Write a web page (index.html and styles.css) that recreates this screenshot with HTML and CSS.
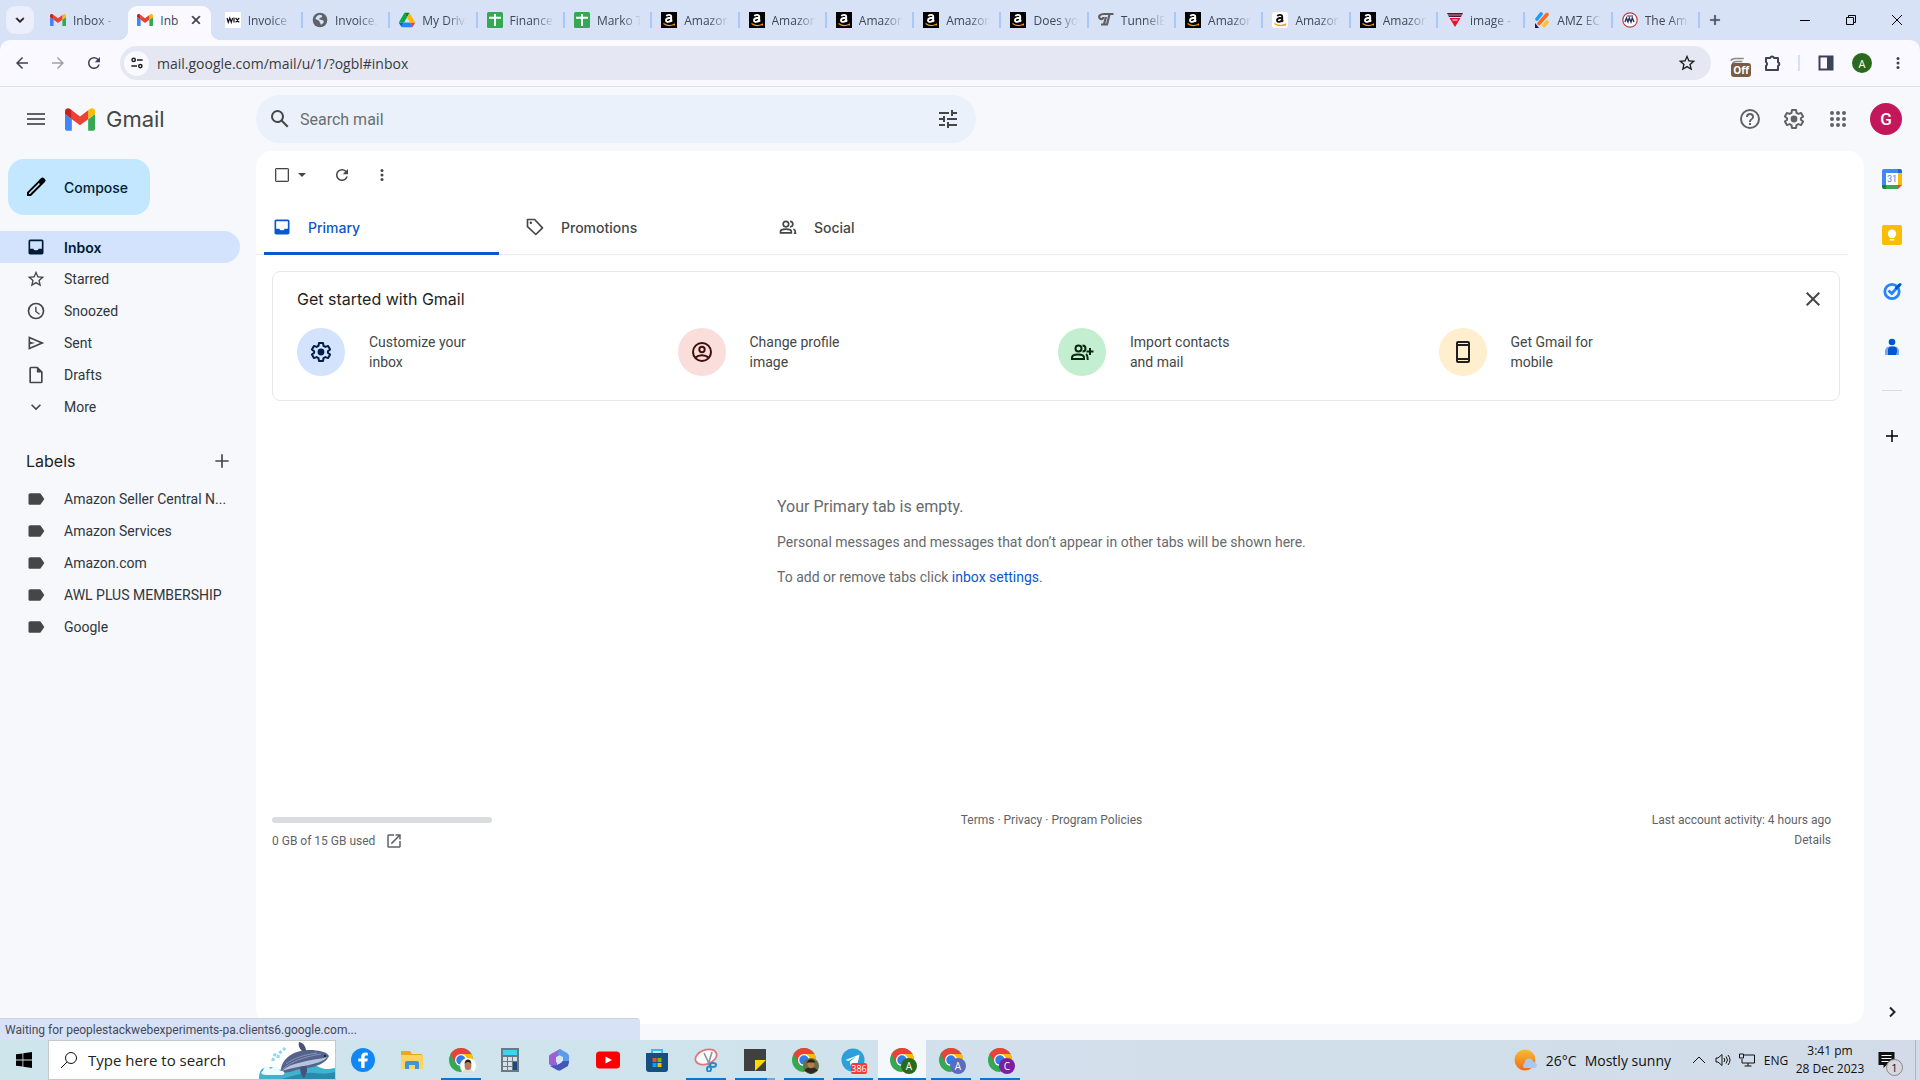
FILE: index.html
```html
<!DOCTYPE html>
<html lang="en">
<head>
<meta charset="utf-8">
<title>Inbox - Gmail</title>
<link rel="stylesheet" href="styles.css">
</head>
<body>
<svg class="sprite" aria-hidden="true">
  <symbol id="gmail" viewBox="52 42 88 66"><path fill="#4285f4" d="M58 108h14V74L52 59v43c0 3.32 2.69 6 6 6"/><path fill="#34a853" d="M120 108h14c3.32 0 6-2.69 6-6V59l-20 15"/><path fill="#fbbc04" d="M120 48v26l20-15v-8c0-7.42-8.47-11.65-14.4-7.2"/><path fill="#ea4335" d="M72 74V48l24 18 24-18v26L96 92"/><path fill="#c5221f" d="M52 51v8l20 15V48l-5.6-4.2c-5.94-4.45-14.4-.22-14.4 7.2"/></symbol>
  <symbol id="drive" viewBox="0 0 87.3 78"><path d="m6.6 66.85 3.85 6.65c.8 1.4 1.95 2.5 3.3 3.3l13.75-23.8H0c0 1.55.4 3.1 1.2 4.5z" fill="#0066da"/><path d="M43.65 25 29.9 1.2c-1.35.8-2.5 1.9-3.3 3.3l-25.4 44A9.06 9.06 0 0 0 0 53h27.5z" fill="#00ac47"/><path d="M73.55 76.8c1.35-.8 2.5-1.9 3.3-3.3l1.6-2.75L86.1 57.5c.8-1.4 1.2-2.95 1.2-4.5H59.8l5.85 11.5z" fill="#ea4335"/><path d="M43.65 25 57.4 1.2C56.05.4 54.5 0 52.9 0H34.4c-1.6 0-3.15.45-4.5 1.2z" fill="#00832d"/><path d="M59.8 53H27.5L13.75 76.8c1.35.8 2.9 1.2 4.5 1.2h50.8c1.6 0 3.15-.45 4.5-1.2z" fill="#2684fc"/><path d="m73.4 26.5-12.7-22c-.8-1.4-1.95-2.5-3.3-3.3L43.65 25 59.8 53h27.45c0-1.55-.4-3.1-1.2-4.5z" fill="#ffba00"/></symbol>
  <symbol id="wix" viewBox="0 0 16 16"><path fill="#fff" d="M0 0h16v16H0z"/><path d="M2 6l1.3 4.3L4.8 6l1.5 4.3L7.6 6M9 5.6v5M10.6 6l3.6 4.4M14.2 6l-3.6 4.4" fill="none" stroke="#111" stroke-width="1.2"/></symbol>
  <symbol id="globe" viewBox="0 0 24 24"><circle cx="12" cy="12" r="11" fill="#5f6368"/><path fill="#d8e2f6" d="M11 4c3 0 5 1 4 3s-4 1-4 3 4 1 6 3-1 5-4 6c0-3-2-3-2-5s-4-2-6-4c1-3 3-5 6-6z"/></symbol>
  <symbol id="sheets" viewBox="0 0 16 16"><rect width="16" height="16" rx="1.5" fill="#34a853"/><path d="M2 5.700h12M8 2v12" stroke="#fff" stroke-width="2"/></symbol>
  <symbol id="amazon" viewBox="0 0 16 16"><path d="M0 0h16v16H0z" fill="#000"/><path d="M5.500 4.300c.5-2 4.700-2 4.700.3v3.800l.8 1.200M10 5.700c-3 .1-5 .6-5 2.500 0 2.300 4 2.200 5-.4" fill="none" stroke="#fff" stroke-width="1.9"/><path d="M2.500 11.500q5 3.600 10.500 1M13.400 11.600v2" fill="none" stroke="#f90" stroke-width="1.2"/></symbol>
  <symbol id="amazon-white" viewBox="0 0 16 16"><rect width="16" height="16" rx="3" fill="#fff"/><path d="M5.500 4.300c.5-2 4.700-2 4.700.3v3.800l.8 1.200M10 5.700c-3 .1-5 .6-5 2.500 0 2.300 4 2.200 5-.4" fill="none" stroke="#111" stroke-width="1.9"/><path d="M2.500 11.500q5 3.600 10.500 1M13.400 11.600v2" fill="none" stroke="#f90" stroke-width="1.4"/></symbol>
  <symbol id="tunnel" viewBox="0 0 16 16"><path d="M15.500 2H6C2 2 .5 4 1.500 6s4 1 4-1M11.500 2.500 9 12.500H3M8 5l-2 7" fill="none" stroke="#5f5f62" stroke-width="2.2"/></symbol>
  <symbol id="triangle" viewBox="0 0 16 16"><path d="M0 1h16l-2 4H2z" fill="#4a1d3c"/><path d="M2.500 6h11L8 15z" fill="#e8112d"/><path d="M5.500 8h5" stroke="#fff" stroke-width="1"/><path d="M1 3h14" stroke="#d88" stroke-width="1"/></symbol>
  <symbol id="bars" viewBox="0 0 16 16"><g stroke-width="3.6" stroke-linecap="round"><path d="M3 7l4-5" stroke="#1e9bff"/><path d="M5 11.500l8-9" stroke="#ff6a1a"/><path d="M10 13.500l3-3.500" stroke="#ffc02e"/></g><path d="M1 11l4 5H1z" fill="#1b1464"/></symbol>
  <symbol id="round" viewBox="0 0 16 16"><circle cx="8" cy="8" r="7.2" fill="#fff" stroke="#c03a46" stroke-width="1.2"/><path d="M3 10l1.500-4L6 10l1.300-4L9 10l1.300-4 1.700 4" fill="none" stroke="#27335f" stroke-width="1.4"/><path d="M5 4h6" stroke="#27335f"/></symbol>
  <symbol id="close" viewBox="0 0 24 24"><path d="M19 6.410 17.590 5 12 10.590 6.410 5 5 6.410 10.590 12 5 17.590 6.410 19 12 13.410 17.590 19 19 17.590 13.410 12z"/></symbol>
  <symbol id="plus" viewBox="0 0 24 24"><path d="M20 13h-7v7h-2v-7H4v-2h7V4h2v7h7z"/></symbol>
  <symbol id="back" viewBox="0 0 24 24"><path d="M20 11H7.830l5.590-5.590L12 4l-8 8 8 8 1.410-1.410L7.830 13H20z"/></symbol>
  <symbol id="refresh" viewBox="0 0 24 24"><path d="M17.650 6.350A7.960 7.960 0 0 0 12 4a8 8 0 1 0 7.730 10h-2.080A5.990 5.990 0 0 1 12 18a6 6 0 1 1 0-12c1.660 0 3.140.69 4.220 1.780L13 11h7V4z"/></symbol>
  <symbol id="sliders" viewBox="0 0 16 16"><g fill="none" stroke="#1f1f1f" stroke-width="1.7"><circle cx="4.200" cy="4.500" r="1.9"/><path d="M8 4.500h6.500M1.500 11.500H8"/><circle cx="11.800" cy="11.500" r="1.9"/></g></symbol>
  <symbol id="star" viewBox="0 0 24 24"><path d="m22 9.240-7.190-.62L12 2 9.190 8.630 2 9.240l5.460 4.730L5.820 21 12 17.270 18.180 21l-1.630-7.030zM12 15.400l-3.760 2.270 1-4.280-3.320-2.880 4.380-.38L12 6.100l1.710 4.040 4.380.38-3.320 2.880 1 4.280z"/></symbol>
  <symbol id="puzzle" viewBox="0 0 20 20"><path d="M3 5h4.200a2 2 0 0 1 3.800 0H15v4.200a2 2 0 0 1 0 3.800V17H3v-4.200a2.200 2.200 0 0 0 0-3.800z" fill="none" stroke="#3c4257" stroke-width="2" stroke-linejoin="round"/></symbol>
  <symbol id="more" viewBox="0 0 24 24"><circle cx="12" cy="6" r="2"/><circle cx="12" cy="12" r="2"/><circle cx="12" cy="18" r="2"/></symbol>
  <symbol id="menu" viewBox="0 0 24 24"><path d="M3 18h18v-2H3zm0-5h18v-2H3zm0-7v2h18V6z"/></symbol>
  <symbol id="search" viewBox="0 0 24 24"><path d="M20.490 19l-5.730-5.730A6.460 6.460 0 0 0 16 9.500 6.500 6.500 0 1 0 9.500 16c1.420 0 2.720-.46 3.780-1.240L19 20.490zM5 9.500a4.500 4.500 0 1 1 9 0 4.500 4.500 0 0 1-9 0z"/></symbol>
  <symbol id="tune" viewBox="0 0 24 24"><path d="M3 17v2h6v-2zM3 5v2h10V5zm10 16v-2h8v-2h-8v-2h-2v6zM7 9v2H3v2h4v2h2V9zm14 4v-2H11v2zm-6-4h2V7h4V5h-4V3h-2z"/></symbol>
  <symbol id="help" viewBox="0 0 24 24"><path d="M11 18h2v-2h-2zm1-16a10 10 0 1 0 0 20 10 10 0 0 0 0-20zm0 18a8 8 0 1 1 0-16 8 8 0 0 1 0 16zm0-14a4 4 0 0 0-4 4h2c0-1.100.9-2 2-2s2 .9 2 2c0 2-3 1.750-3 5h2c0-2.250 3-2.500 3-5a4 4 0 0 0-4-4z"/></symbol>
  <symbol id="gear" viewBox="0 0 24 24"><path d="M10 3h4l.5 2.800 1.900 1.100 2.700-1 2 3.500-2.200 1.800v1.600l2.200 1.800-2 3.500-2.700-1-1.900 1.100L14 21h-4l-.5-2.800-1.900-1.100-2.700 1-2-3.500 2.200-1.800v-1.600L2.900 9.400l2-3.500 2.700 1 1.900-1.100z" fill="none" stroke="currentColor" stroke-width="2" stroke-linejoin="round"/><circle cx="12" cy="12" r="3.4"/></symbol>
  <symbol id="apps" viewBox="0 0 24 24"><circle cx="6" cy="6" r="2"/><circle cx="12" cy="6" r="2"/><circle cx="18" cy="6" r="2"/><circle cx="6" cy="12" r="2"/><circle cx="12" cy="12" r="2"/><circle cx="18" cy="12" r="2"/><circle cx="6" cy="18" r="2"/><circle cx="12" cy="18" r="2"/><circle cx="18" cy="18" r="2"/></symbol>
  <symbol id="pencil" viewBox="0 0 24 24"><path d="m3 17.200 12-12 .1-.1 1.900-1.900a2.200 2.200 0 0 1 3.100 0l.8.800a2.200 2.200 0 0 1 0 3.100L7 21H3zm2 .9v.9h1L16 9.100 14.900 8z"/></symbol>
  <symbol id="inbox" viewBox="0 0 24 24"><path d="M19 3H5a2 2 0 0 0-2 2v14c0 1.100.89 2 2 2h14a2 2 0 0 0 2-2V5a2 2 0 0 0-2-2zm0 11h-4c0 1.660-1.350 2-3 2s-3-.34-3-2H5V5h14z"/></symbol>
  <symbol id="clock" viewBox="0 0 24 24"><path d="M12 2a10 10 0 1 0 0 20 10 10 0 0 0 0-20zm0 18a8 8 0 1 1 0-16 8 8 0 0 1 0 16zm.7-13H11v6l4.800 3.600 1-1.400-4.100-3z"/></symbol>
  <symbol id="send" viewBox="0 0 24 24"><path d="M3 4v16l19-8zm2 13v-3.500l6-1.500-6-1.500V7l11.850 5z"/></symbol>
  <symbol id="file" viewBox="0 0 24 24"><path d="M14 2H6a2 2 0 0 0-2 2v16c0 1.100.9 2 2 2h12a2 2 0 0 0 2-2V8zM6 20V4h7v5h5v11z"/></symbol>
  <symbol id="down" viewBox="0 0 24 24"><path d="M16.590 8.590 12 13.170 7.410 8.590 6 10l6 6 6-6z"/></symbol>
  <symbol id="label" viewBox="0 0 24 24"><path d="M17.630 5.840A2 2 0 0 0 16 5H5a2 2 0 0 0-2 2v10c0 1.100.9 2 2 2h11c.67 0 1.270-.33 1.630-.84L22 12z"/></symbol>
  <symbol id="tag" viewBox="0 0 24 24"><path d="M3 3h8.500l9.500 10-8 8-10-9.500z" fill="none" stroke="currentColor" stroke-width="2" stroke-linejoin="round"/><circle cx="7" cy="7" r="1.5"/></symbol>
  <symbol id="people" viewBox="0 0 24 24"><g fill="none" stroke="currentColor" stroke-width="2"><circle cx="9.500" cy="8.500" r="3.3"/><path d="M3 19v-1.500c0-4 13-4 13 0V19z"/><path d="M14.500 5.200a3.300 3.300 0 0 1 0 6.600M18.500 14.500c2 1 2.500 2 2.500 5h-2"/></g></symbol>
  <symbol id="person" viewBox="0 0 24 24"><g fill="none" stroke="currentColor" stroke-width="2"><circle cx="12" cy="12" r="9"/><circle cx="12" cy="9.500" r="2.7"/><path d="M5.500 17.500c3-3 10-3 13 0"/></g></symbol>
  <symbol id="add-people" viewBox="0 0 24 24"><g fill="none" stroke="currentColor" stroke-width="2"><circle cx="8.500" cy="8.500" r="3"/><path d="M2 19v-1.500c0-4 12-4 12 0V19z"/><path d="M12.500 5.500a3 3 0 0 1 0 6M16 14c1.500 1 1.700 2 1.700 6M20 8v7M16.500 11.500h7"/></g></symbol>
  <symbol id="phone" viewBox="0 0 24 24"><path d="M17 1H7a2 2 0 0 0-2 2v18c0 1.100.9 2 2 2h10a2 2 0 0 0 2-2V3a2 2 0 0 0-2-2zm0 20H7v-1h10zm0-3H7V6h10zM7 4V3h10v1z"/></symbol>
  <symbol id="launch" viewBox="0 0 24 24"><path d="M19 19H5V5h7V3H5a2 2 0 0 0-2 2v14a2 2 0 0 0 2 2h14c1.100 0 2-.9 2-2v-7h-2zM14 3v2h3.590l-9.830 9.830 1.410 1.410L19 6.410V10h2V3z"/></symbol>
  <symbol id="chrome" viewBox="0 0 48 48"><circle cx="24" cy="24" r="24" fill="#34a853"/><path fill="#fbbc04" d="M24 12h20.800A24 24 0 0 1 24 48l10.400-18z"/><path fill="#ea4335" d="M3.200 12a24 24 0 0 1 41.600 0H24L13.600 30z"/><circle cx="24" cy="24" r="12" fill="#fff"/><circle cx="24" cy="24" r="9.5" fill="#2f7de9"/></symbol>
</svg>

<header class="browser">
  <div class="tabstrip">
    <button class="tab-search" aria-label="Search tabs"><svg><use href="#down"/></svg></button>
    <nav class="tabs">
      <a href="#" class="tab plain"><svg><use href="#gmail"/></svg><span>Inbox -</span></a>
      <div class="tab active"><svg><use href="#gmail"/></svg><span>Inb</span><button class="tab-close" aria-label="Close tab"><svg><use href="#close"/></svg></button></div>
      <a href="#" class="tab plain"><svg><use href="#wix"/></svg><span>Invoice</span></a>
      <a href="#" class="tab"><svg><use href="#globe"/></svg><span>Invoice.</span></a>
      <a href="#" class="tab"><svg><use href="#drive"/></svg><span>My Driv</span></a>
      <a href="#" class="tab"><svg><use href="#sheets"/></svg><span>Finance</span></a>
      <a href="#" class="tab"><svg><use href="#sheets"/></svg><span>Marko T</span></a>
      <a href="#" class="tab"><svg><use href="#amazon"/></svg><span>Amazor</span></a>
      <a href="#" class="tab"><svg><use href="#amazon"/></svg><span>Amazor</span></a>
      <a href="#" class="tab"><svg><use href="#amazon"/></svg><span>Amazor</span></a>
      <a href="#" class="tab"><svg><use href="#amazon"/></svg><span>Amazor</span></a>
      <a href="#" class="tab"><svg><use href="#amazon"/></svg><span>Does yo</span></a>
      <a href="#" class="tab"><svg><use href="#tunnel"/></svg><span>TunnelE</span></a>
      <a href="#" class="tab"><svg><use href="#amazon"/></svg><span>Amazor</span></a>
      <a href="#" class="tab"><svg><use href="#amazon-white"/></svg><span>Amazor</span></a>
      <a href="#" class="tab"><svg><use href="#amazon"/></svg><span>Amazor</span></a>
      <a href="#" class="tab"><svg><use href="#triangle"/></svg><span>image -</span></a>
      <a href="#" class="tab"><svg><use href="#bars"/></svg><span>AMZ EC</span></a>
      <a href="#" class="tab"><svg><use href="#round"/></svg><span>The Am</span></a>
    </nav>
    <button class="new-tab" aria-label="New tab"><svg><use href="#plus"/></svg></button>
    <div class="window-buttons">
      <button aria-label="Minimize"><svg viewBox="0 0 12 12"><path d="M1 6.500h10"/></svg></button>
      <button aria-label="Restore"><svg viewBox="0 0 12 12"><path d="M1.500 3.500h7v7h-7zM3.500 3.500v-2h7v7h-2"/></svg></button>
      <button aria-label="Close"><svg viewBox="0 0 12 12"><path d="M1 1l10 10M11 1 1 11"/></svg></button>
    </div>
  </div>
  <div class="toolbar">
    <button class="tool" aria-label="Back"><svg><use href="#back"/></svg></button>
    <button class="tool forward" aria-label="Forward"><svg><use href="#back"/></svg></button>
    <button class="tool" aria-label="Reload"><svg><use href="#refresh"/></svg></button>
    <div class="omnibox">
      <button class="site-info" aria-label="Site information"><svg><use href="#sliders"/></svg></button>
      <input aria-label="Address" value="mail.google.com/mail/u/1/?ogbl#inbox">
      <button class="bookmark" aria-label="Bookmark"><svg><use href="#star"/></svg></button>
    </div>
    <div class="extensions">
      <button class="tool ext" aria-label="Extension"><svg viewBox="0 0 24 24"><path d="M4 9c1-3 3-3 6-3h11M6 13c1-3 3-3 5-3h8M7 13v7" fill="none" stroke="#8a8a8a" stroke-width="2"/></svg><span class="off">Off</span></button>
      <button class="tool" aria-label="Extensions"><svg class="puzzle"><use href="#puzzle"/></svg></button>
      <i class="divider"></i>
      <button class="tool" aria-label="Side panel"><svg viewBox="0 0 18 18"><path d="M2.500 2.500h13v13h-13z" fill="none" stroke="#3c4257" stroke-width="2"/><path d="M10 2h6v14h-6z"/></svg></button>
      <button class="profile" aria-label="Profile">A</button>
      <button class="tool" aria-label="Menu"><svg><use href="#more"/></svg></button>
    </div>
  </div>
</header>

<div class="gmail">
  <header class="mail-header">
    <div class="brand">
      <button class="icon-button" aria-label="Main menu"><svg><use href="#menu"/></svg></button>
      <svg class="logo"><use href="#gmail"/></svg><span>Gmail</span>
    </div>
    <form class="search">
      <button type="button" aria-label="Search"><svg><use href="#search"/></svg></button>
      <input aria-label="Search mail" placeholder="Search mail">
      <button type="button" aria-label="Search options"><svg><use href="#tune"/></svg></button>
    </form>
    <div class="account">
      <button class="icon-button" aria-label="Support"><svg><use href="#help"/></svg></button>
      <button class="icon-button" aria-label="Settings"><svg><use href="#gear"/></svg></button>
      <button class="icon-button" aria-label="Google apps"><svg><use href="#apps"/></svg></button>
      <button class="avatar" aria-label="Account">G</button>
    </div>
  </header>

  <aside class="sidebar">
    <button class="compose"><svg><use href="#pencil"/></svg>Compose</button>
    <nav>
      <a href="#" class="current"><svg><use href="#inbox"/></svg><span>Inbox</span></a>
      <a href="#"><svg><use href="#star"/></svg><span>Starred</span></a>
      <a href="#"><svg><use href="#clock"/></svg><span>Snoozed</span></a>
      <a href="#"><svg><use href="#send"/></svg><span>Sent</span></a>
      <a href="#"><svg><use href="#file"/></svg><span>Drafts</span></a>
      <a href="#"><svg><use href="#down"/></svg><span>More</span></a>
    </nav>
    <div class="labels-head"><h2>Labels</h2><button aria-label="Create new label"><svg><use href="#plus"/></svg></button></div>
    <nav>
      <a href="#"><svg><use href="#label"/></svg><span>Amazon Seller Central N...</span></a>
      <a href="#"><svg><use href="#label"/></svg><span>Amazon Services</span></a>
      <a href="#"><svg><use href="#label"/></svg><span>Amazon.com</span></a>
      <a href="#"><svg><use href="#label"/></svg><span>AWL PLUS MEMBERSHIP</span></a>
      <a href="#"><svg><use href="#label"/></svg><span>Google</span></a>
    </nav>
  </aside>

  <main class="content">
    <div class="actions">
      <input type="checkbox" aria-label="Select all">
      <button class="caret" aria-label="Select options"><svg viewBox="0 0 10 10"><path d="M1 3h8L5 7z"/></svg></button>
      <button class="act" aria-label="Refresh"><svg><use href="#refresh"/></svg></button>
      <button class="act" aria-label="More"><svg><use href="#more"/></svg></button>
    </div>
    <nav class="categories">
      <a href="#" class="selected"><svg><use href="#inbox"/></svg>Primary</a>
      <a href="#"><svg><use href="#tag"/></svg>Promotions</a>
      <a href="#"><svg><use href="#people"/></svg>Social</a>
    </nav>
    <section class="starter">
      <div class="starter-head"><h1>Get started with Gmail</h1><button aria-label="Dismiss"><svg><use href="#close"/></svg></button></div>
      <div class="steps">
        <a href="#"><span class="disc blue"><svg><use href="#gear"/></svg></span><span>Customize your<br>inbox</span></a>
        <a href="#"><span class="disc red"><svg><use href="#person"/></svg></span><span>Change profile<br>image</span></a>
        <a href="#"><span class="disc green"><svg><use href="#add-people"/></svg></span><span>Import contacts<br>and mail</span></a>
        <a href="#"><span class="disc yellow"><svg><use href="#phone"/></svg></span><span>Get Gmail for<br>mobile</span></a>
      </div>
    </section>
    <section class="empty">
      <div>
        <h2>Your Primary tab is empty.</h2>
        <p>Personal messages and messages that don’t appear in other tabs will be shown here.</p>
        <p>To add or remove tabs click <a href="#">inbox settings</a>.</p>
      </div>
    </section>
    <footer>
      <div class="storage"><div class="meter"></div><p>0 GB of 15 GB used <svg><use href="#launch"/></svg></p></div>
      <p class="legal"><a href="#">Terms</a> · <a href="#">Privacy</a> · <a href="#">Program Policies</a></p>
      <p class="activity">Last account activity: 4 hours ago<br><a href="#">Details</a></p>
    </footer>
  </main>

  <aside class="addons">
    <button aria-label="Calendar"><svg viewBox="0 0 20 20"><path d="M0 2a2 2 0 0 1 2-2h14v4H4v12H0z" fill="#4285f4"/><path d="M16 0h2a2 2 0 0 1 2 2v2h-4z" fill="#1967d2"/><path d="M16 4h4v12h-4z" fill="#fbbc04"/><path d="M4 16h12v4H4z" fill="#34a853"/><path d="M0 16h4v4H2a2 2 0 0 1-2-2z" fill="#188038"/><path d="M16 16h4l-4 4z" fill="#ea4335"/><path d="M4 4h12v12H4z" fill="#fff"/><text x="10" y="13" text-anchor="middle" font-size="9" fill="#4285f4">31</text></svg></button>
    <button aria-label="Keep"><svg viewBox="0 0 20 20"><rect width="20" height="20" rx="2" fill="#fbbc04"/><path d="M10 4.500a4.200 4.200 0 0 0-2.300 7.700V13h4.600v-.8A4.200 4.200 0 0 0 10 4.500zM7.800 14h4.400v1.500H7.800z" fill="#fff"/></svg></button>
    <button aria-label="Tasks"><svg viewBox="0 0 20 20"><circle cx="10" cy="10.500" r="7.2" fill="none" stroke="#2684fc" stroke-width="2.8"/><path d="M6.500 9.500 9.800 12.500 17.500 4" fill="none" stroke="#2684fc" stroke-width="2.8"/><path d="M14.500 7 18 3.500" stroke="#0057cc" stroke-width="3" stroke-linecap="round"/></svg></button>
    <button aria-label="Contacts"><svg viewBox="0 0 20 20"><circle cx="10" cy="5" r="3.3" fill="#0057cc"/><path d="M3 18v-4a4.500 4.500 0 0 1 4.500-4.500h5A4.500 4.500 0 0 1 17 14v4z" fill="#7ba5f7"/><path d="M6 18v-5a3.500 3.500 0 0 1 3.500-3.500h3A3.500 3.500 0 0 1 15 13v2l-1 3z" fill="#0057cc"/></svg></button>
    <hr>
    <button aria-label="Get add-ons"><svg class="add"><use href="#plus"/></svg></button>
    <button class="collapse" aria-label="Hide side panel"><svg viewBox="0 0 12 12"><path d="M4 1.500 8.500 6 4 10.500" fill="none" stroke="#222" stroke-width="2"/></svg></button>
  </aside>
  <output class="status">Waiting for peoplestackwebexperiments-pa.clients6.google.com...</output>
</div>

<footer class="taskbar">
  <button class="start" aria-label="Start"><svg viewBox="0 0 16 16"><path d="M0 2.300 6.500 1.400v6.200H0zM7.300 1.300 16 0v7.600H7.300zM0 8.400h6.500v6.200L0 13.700zM7.300 8.400H16V16l-8.700-1.300z"/></svg></button>
  <label class="task-search">
    <svg class="lens" viewBox="0 0 18 18"><circle cx="11" cy="7" r="5.5"/><path d="m7 11-6 6"/></svg>
    <input aria-label="Type here to search" placeholder="Type here to search">
    <svg class="whale" viewBox="0 0 76 38"><path d="M0 38c0-9 3-11 8-12 10-1 14 5 24 3 14-4 20-7 28-3 6 3 10 2 16 1v11z" fill="#3fb2cc"/><path d="M22 38c14-3 22-7 33-6 9 1 14 1 21-1v7z" fill="#268bad"/><path d="M22 28C24 15 38 8 54 9c8 1 14 2 16 6-3 7-12 11-23 12-10 1-16 5-24 5z" fill="#55638c"/><path d="M69 16c-10 9-28 8-46 14 9-9 27-10 46-14z" fill="#b8c4dd"/><path d="M24 28c9-8 21-12 38-15M27 23c8-6 17-9 31-11" stroke="#8795bb" fill="none"/><path d="M43 10c-3-3-4-6-3-9 5 1 7 5 7 9zM41 26c0 5 1 8 4 11 3-5 4-8 2-12z" fill="#45527a"/><circle cx="66" cy="15" r="1" fill="#111"/><path d="M4 30c1-6 6-5 8-2 3-4 9-2 9 2 5-1 6 4 2 4H7c-5 0-6-3-3-4z" fill="#edfaff"/><path d="M14 20c0-5 3-6 2-9M19 17c0-6 4-6 8-11" stroke="#8bd7f0" stroke-width="3" stroke-dasharray="3 2" fill="none"/></svg>
  </label>
  <nav class="apps">
    <button aria-label="Facebook"><svg viewBox="0 0 24 24"><circle cx="12" cy="12" r="12" fill="#1087f5"/><path d="M10.200 20v-6.500H7.300v-3h2.900V8.500c0-2.700 1.800-4 4.400-4l2.200.2v2.700h-1.500c-1.400 0-1.700.7-1.700 1.500v1.600h3.200l-.5 3h-2.700V20z" fill="#fff"/></svg></button>
    <button aria-label="File Explorer"><svg viewBox="0 0 24 24"><path d="M1 3h9l2 3h10v15H1z" fill="#e9a820"/><path d="M1 7h22v14H1z" fill="#ffd45e"/><path d="M5 21v-6a2 2 0 0 1 2-2h10a2 2 0 0 1 2 2v6h-4v-4H9v4z" fill="#3898dc"/></svg></button>
    <button class="running" aria-label="Chrome"><svg><use href="#chrome"/></svg><span class="badge face"><svg viewBox="0 0 14 14"><circle cx="7" cy="7" r="7" fill="#fff"/><path d="M2 13c1-5 9-5 10 0l-5 1z" fill="#ddd"/><ellipse cx="7" cy="6.500" rx="3" ry="4" fill="#b87955"/><path d="M4 5c0-5 6-5 6 0-2-2-4-2-6 0" fill="#211b1b"/></svg></span></button>
    <button aria-label="Calculator"><svg viewBox="0 0 24 24"><path d="M3 0h18v24H3z" fill="#6b7985"/><path d="M5 2h14v5H5z" fill="#42d1f5"/><path d="M5 9h4v4H5zm5 0h4v4h-4zm5 0h4v4h-4zM5 14h4v4H5zm5 0h4v4h-4zM5 19h4v3H5zm5 0h4v3h-4z" fill="#d9e0e5"/><path d="M15 14h4v8h-4z" fill="#174b87"/></svg></button>
    <button aria-label="Microsoft 365"><svg viewBox="0 0 24 24"><path d="M13 1 4 6a3 3 0 0 0-2 3v7l4 3 4-2V9l6-5z" fill="#9b5fd6"/><path d="m13 1 7 4a4 4 0 0 1 2 3v8l-6-3V9l-6-3z" fill="#5b9bea"/><path d="m22 13-1 5-7 4a4 4 0 0 1-4 0l-7-4 7-1 6-4z" fill="#4257b8"/><path d="m9 9 3-1 3 2v4l-3 2-3-2z" fill="#d5e6ee"/></svg></button>
    <button aria-label="YouTube"><svg viewBox="0 0 24 24"><rect y="3.500" width="24" height="17" rx="3.5" fill="#f00"/><path d="m9.500 8.500 6.500 3.500-6.500 3.500z" fill="#fff"/></svg></button>
    <button aria-label="Store"><svg viewBox="0 0 24 24"><path d="M7 6V2h10v4" fill="none" stroke="#32bdf2" stroke-width="2"/><path d="M1 5h22v16a3 3 0 0 1-3 3H4a3 3 0 0 1-3-3z" fill="#174f82"/><path d="M7.500 10h4v4h-4z" fill="#f25022"/><path d="M12.500 10h4v4h-4z" fill="#7fba00"/><path d="M7.500 15h4v4h-4z" fill="#00a4ef"/><path d="M12.500 15h4v4h-4z" fill="#ffb900"/></svg></button>
    <button class="running" aria-label="Snipping Tool"><svg viewBox="0 0 24 24"><ellipse cx="12" cy="9" rx="11" ry="7" transform="rotate(-20 12 9)" fill="#fff" stroke="#e57378" stroke-width="1.8"/><path d="m10 5 6 13M18 4l-4 13" stroke="#8b98a2" stroke-width="1.7"/><g fill="none" stroke="#2788cf" stroke-width="2"><ellipse cx="19" cy="17" rx="3" ry="2"/><ellipse cx="15" cy="21" rx="2" ry="2.5"/></g></svg></button>
    <button class="running partial" aria-label="Sticky Notes"><svg viewBox="0 0 24 24"><path d="M1 1h22v22H1z" fill="#404040"/><path d="M12 12h11L12 23z" fill="#ffd900"/></svg></button>
    <button class="running" aria-label="Chrome"><svg><use href="#chrome"/></svg><span class="badge face"><svg viewBox="0 0 14 14"><circle cx="7" cy="7" r="7" fill="#687044"/><path d="M1 11c2-4 10-4 12 0l-6 3z" fill="#292a20"/><circle cx="7" cy="6" r="3" fill="#b87b4b"/><path d="M3 4c2-4 6-4 8 0z" fill="#2b2115"/></svg></span></button>
    <button class="running" aria-label="Telegram"><svg viewBox="0 0 24 24"><circle cx="12" cy="12" r="11.5" fill="#2ba0db"/><path d="m4.500 12 14-5.500-2.500 12-4-3-2.500 2-.5-4 6-5-7.500 4.500z" fill="#fff"/></svg><span class="count">386</span></button>
    <button class="running focused" aria-label="Chrome"><svg><use href="#chrome"/></svg><span class="badge a1">A</span></button>
    <button class="running" aria-label="Chrome"><svg><use href="#chrome"/></svg><span class="badge a2">A</span></button>
    <button class="running" aria-label="Chrome"><svg><use href="#chrome"/></svg><span class="badge a3">C</span></button>
  </nav>
  <div class="tray">
    <button class="weather"><svg viewBox="0 0 24 24"><defs><linearGradient id="sun" x2="0" y2="1"><stop stop-color="#f5bd2d"/><stop offset="1" stop-color="#f26b1d"/></linearGradient></defs><circle cx="11" cy="12" r="10.5" fill="url(#sun)"/><path d="M10 20a3 3 0 0 1 1-5 4 4 0 0 1 8-1 3.200 3.200 0 0 1 2 6z" fill="#a9c8f4"/></svg><span>26°C</span><span>Mostly sunny</span></button>
    <button class="tray-icon" aria-label="Hidden icons"><svg viewBox="0 0 16 16"><path d="m2 11 6-6 6 6"/></svg></button>
    <button class="tray-icon" aria-label="Volume"><svg viewBox="0 0 16 16"><path d="M1 6h2l4-3.500v11L3 10H1zM9 6q1.500 2 0 4M11 4.500q3 3.500 0 7M13 3q4 5 0 10"/></svg></button>
    <button class="tray-icon" aria-label="Network"><svg viewBox="0 0 16 16"><path d="M5 3h10.500v8H3V7M.5 2h4v4h-4zM9 11v3M5.500 14h7"/></svg></button>
    <button class="lang">ENG</button>
    <button class="clock"><span>3:41 pm</span><span>28 Dec 2023</span></button>
    <button class="notify" aria-label="Notifications"><svg viewBox="0 0 16 16"><path d="M0 0h16v13H8l-3 3v-3H0z"/><path d="M3 3.500h10M3 6.500h10M3 9.500h7" stroke="#fff"/></svg><span>1</span></button>
    <i class="peek"></i>
  </div>
</footer>
</body>
</html>
```
FILE: styles.css
```css
* { box-sizing: border-box; }

:root {
  --ui: "Open Sans", "Noto Sans", sans-serif;
  --mail: Roboto, sans-serif;
  --display: Inter, Roboto, sans-serif;
  --ink: #444746;
}

body {
  margin: 0;
  min-height: 100vh;
  display: flex;
  flex-direction: column;
  background: #f6f8fc;
  color: #1f1f1f;
  font-family: var(--mail);
  font-size: 14px;
}

h1, h2, p { margin: 0; font-weight: 400; }
a { color: inherit; text-decoration: none; }
button { padding: 0; border: 0; background: none; color: inherit; font: inherit; display: flex; align-items: center; justify-content: center; flex: none; }
input { font: inherit; color: inherit; border: 0; background: none; padding: 0; min-width: 0; }
svg { display: block; flex: none; width: 20px; height: 20px; fill: currentColor; }
.sprite { position: absolute; width: 0; height: 0; }

/* Browser frame */
.browser { background: #d8e2f6; font-family: var(--ui); font-size: 12px; }
.tabstrip { display: flex; align-items: center; height: 40px; }
.tab-search { width: 28px; height: 28px; margin: 0 5px 0 6px; border-radius: 9px; background: #eceffb; }
.tab-search svg { width: 16px; height: 16px; stroke: #1f1f1f; stroke-width: 1; }
.tabs { display: grid; grid-auto-flow: column; grid-auto-columns: minmax(0, 1fr); flex: 1; min-width: 0; align-self: stretch; }
.tab {
  position: relative;
  min-width: 0;
  display: flex;
  align-items: center;
  gap: 7px;
  padding: 0 5px 0 11px;
  color: #3f4759;
  background: linear-gradient(#a8c7fa, #a8c7fa) left center / 2px 16px no-repeat;
}
.tab svg { width: 16px; height: 16px; }
.tab > span { flex: 1; min-width: 0; overflow: hidden; white-space: nowrap; mask-image: linear-gradient(90deg, #000 50%, transparent 92%); }
.tab.plain { background: none; }
.tab.active { margin: 6px 3px 0 2px; padding: 0 8px 6px 9px; background: #f9f9ff; border-radius: 9px 9px 0 0; }
.tab.active > span { mask-image: none; }
.tab.active::before, .tab.active::after { content: ""; position: absolute; bottom: 0; width: 9px; height: 9px; }
.tab.active::before { right: 100%; background: radial-gradient(circle at 0 0, transparent 9px, #f9f9ff 9px); }
.tab.active::after { left: 100%; background: radial-gradient(circle at 100% 0, transparent 9px, #f9f9ff 9px); }
.tab-close svg { width: 14px; height: 14px; stroke: #1f1f1f; }
.new-tab { width: 34px; height: 34px; color: #3f4759; background: linear-gradient(#a8c7fa, #a8c7fa) left center / 2px 16px no-repeat; }
.new-tab svg { width: 14px; height: 14px; stroke: #3f4759; }
.window-buttons { display: flex; margin-left: 50px; }
.window-buttons button { width: 46px; height: 34px; }
.window-buttons svg { width: 12px; height: 12px; fill: none; stroke: #000; }
.toolbar { display: flex; align-items: center; height: 47px; padding: 0 4px; background: #f9f9ff; border-bottom: 1px solid #dde1ec; border-radius: 10px 10px 0 0; }
.tool { position: relative; width: 36px; height: 34px; color: #3c4257; }
.tool svg { width: 18px; height: 18px; }
.tool .puzzle { width: 20px; height: 20px; }
.forward { color: #a0a2aa; }
.forward svg { transform: scaleX(-1); }
.omnibox { flex: 1; display: flex; align-items: center; height: 34px; margin-left: 8px; padding: 0 14px 0 4px; border-radius: 17px; background: #e5e8f3; font-size: 14px; }
.omnibox input { flex: 1; margin-left: 8px; color: #3a3a3e; }
.site-info { width: 25px; height: 25px; border-radius: 50%; background: #f9f9ff; }
.site-info svg { width: 14px; height: 14px; }
.bookmark svg { width: 20px; height: 20px; }
.extensions { display: flex; align-items: center; margin-left: 8px; }
.off { position: absolute; right: 4px; bottom: 3px; padding: 0 2px; line-height: 14px; border-radius: 3px; background: #7a5c43; color: #fff; font-size: 10px; font-weight: 700; }
.divider { width: 2px; height: 16px; margin: 0 8px 0 7px; background: #d3e1fb; }
.profile { width: 20px; height: 20px; margin: 0 8px; border-radius: 50%; background: #2b6a1d; color: #fff; font-size: 11px; }

/* Mail application */
.gmail { position: relative; flex: 1; display: grid; grid-template: 64px 1fr / 256px minmax(0, 1fr) 56px; padding-bottom: 16px; }
.mail-header { grid-column: 1 / -1; display: grid; grid-template-columns: 256px minmax(0, 720px) 1fr; align-items: center; }
.brand { display: flex; align-items: center; padding-left: 16px; color: var(--ink); font-family: var(--display); font-size: 22px; }
.icon-button { width: 40px; height: 40px; color: #5f6368; }
.icon-button svg { width: 24px; height: 24px; }
.logo { width: 30px; height: 23px; margin: 0 11px 0 9px; }
.search { display: flex; align-items: center; height: 48px; padding-left: 12px; border-radius: 24px; background: #eaf1fb; color: var(--ink); }
.search button { width: 24px; height: 44px; }
.search button:last-child { width: 56px; }
.search svg { width: 24px; height: 24px; }
.search input { flex: 1; margin-left: 8px; font-size: 16px; }
.search input::placeholder { color: #6a6d70; opacity: 1; }
.account { display: flex; justify-content: flex-end; align-items: center; gap: 4px; padding-right: 18px; }
.avatar { width: 32px; height: 32px; margin-left: 8px; border-radius: 50%; background: #c2185b; color: #fff; font-size: 17px; font-weight: 500; }

.sidebar { padding-top: 8px; }
.compose { width: 142px; height: 56px; margin: 0 0 16px 8px; padding-left: 16px; justify-content: flex-start; gap: 16px; border-radius: 16px; background: #c2e7ff; color: #001d35; font-family: var(--display); font-weight: 500; }
.compose svg { width: 24px; height: 24px; color: #000; }
.sidebar nav a { display: flex; align-items: center; gap: 18px; height: 32px; margin-right: 16px; padding: 0 10px 0 26px; border-radius: 0 16px 16px 0; }
.sidebar nav svg { color: var(--ink); }
.sidebar nav span { white-space: nowrap; color: #30363b; }
.sidebar nav .current { background: #d3e3fd; font-family: var(--display); font-weight: 600; }
.sidebar nav .current svg, .sidebar nav .current span { color: #001d35; }
.labels-head { display: flex; align-items: center; justify-content: space-between; margin: 16px 24px 0 26px; height: 44px; }
.labels-head h2 { font-family: var(--display); font-size: 16px; }
.labels-head svg { color: var(--ink); }

.content { background: #fff; border-radius: 16px; }
.actions { display: flex; align-items: center; height: 48px; padding-left: 17px; color: var(--ink); }
.actions input { appearance: none; width: 14px; height: 14px; margin: 0 9px 0 2px; border: 1px solid var(--ink); border-radius: 1px; outline: 1px solid #c4c5c5; outline-offset: -2px; }
.caret { width: 8px; }
.caret svg { width: 10px; height: 10px; }
.act { width: 40px; height: 40px; }
.act svg { width: 18px; height: 18px; }
.caret + .act { margin-left: 16px; }
.categories { display: flex; height: 56px; margin-right: 16px; padding-left: 8px; gap: 18px; border-bottom: 1px solid #e9ebee; font-family: var(--display); }
.categories a { display: flex; align-items: center; gap: 16px; width: 235px; height: 56px; padding: 0 8px; color: var(--ink); font-weight: 500; }
.categories .selected { color: #0b57d0; box-shadow: inset 0 -3px #0b57d0; }
.starter { margin: 16px 24px 0 16px; height: 130px; padding: 15px 14px 0 24px; border: 1px solid #e6e8ea; border-radius: 8px; }
.starter-head { display: flex; justify-content: space-between; align-items: center; height: 24px; margin-bottom: 17px; }
.starter-head h1 { font-family: var(--display); font-size: 16px; }
.starter-head svg { width: 24px; height: 24px; color: var(--ink); }
.steps { display: grid; grid-template-columns: repeat(4, 1fr); margin-right: 6px; }
.steps a { display: flex; align-items: center; gap: 24px; line-height: 20px; color: var(--ink); }
.disc { width: 48px; height: 48px; display: grid; place-items: center; border-radius: 50%; }
.disc svg { width: 24px; height: 24px; }
.blue { background: #d3e3fd; color: #041e49; }
.red { background: #f9dedc; color: #410e0b; }
.green { background: #c4eed0; color: #072711; }
.yellow { background: #ffefcf; color: #1f1f1f; }
.empty { display: grid; grid-template-columns: minmax(0, 540px); justify-content: center; padding: 94px 26px 0 0; color: #666a6d; }
.empty h2 { font-size: 16px; line-height: 24px; margin-bottom: 13px; }
.empty p { line-height: 20px; margin-bottom: 15px; }
.empty p a { color: #0b57d0; }
.content footer { display: grid; grid-template-columns: 1fr 1fr 1fr; margin: 208px 33px 0 16px; font-size: 12px; line-height: 20px; color: #5f6368; }
.meter { width: 220px; height: 6px; margin: 7px 0 8px; border-radius: 3px; background: #dadce0; }
.storage p { display: flex; align-items: center; gap: 10px; }
.storage svg { width: 18px; height: 18px; }
.legal { text-align: center; }
.activity { text-align: right; }

.addons { display: flex; flex-direction: column; align-items: center; }
.addons button { width: 56px; height: 56px; }
.addons hr { width: 20px; margin: 15px 0 17px; border: 0; border-top: 1px solid #dadce0; }
.add { width: 18px; height: 18px; color: #000; }
.addons .collapse { height: 24px; margin-top: auto; }
.collapse svg { width: 12px; height: 12px; }
.status { position: absolute; left: 0; bottom: 0; width: 640px; max-width: 100%; height: 22px; padding-left: 5px; border-top: 1px solid #cdd2df; border-radius: 0 4px 0 0; background: #d8e2f6; color: #454a58; font-size: 12px; line-height: 22px; }

/* Taskbar */
.taskbar { display: flex; height: 40px; background: linear-gradient(90deg, #cee5ec, #cfe3ec 40%, #d3dfec 55%, #d0dfea 75%, #d3dbe9); font-family: var(--ui); font-size: 15px; color: #111; }
.start { width: 48px; color: #000; }
.start svg { width: 16px; height: 16px; }
.task-search { display: flex; align-items: center; width: 288px; padding-left: 11px; border: 1px solid #c3c8cb; background: #fff; }
.lens { width: 18px; height: 18px; fill: none; stroke: #111; stroke-width: 1; }
.task-search input { flex: 1; margin-left: 10px; font-size: 15px; }
.task-search input::placeholder { color: #222; opacity: 1; }
.whale { width: 76px; height: 38px; }
.apps { display: flex; padding-left: 3px; gap: 1px; }
.apps button { position: relative; width: 48px; height: 40px; }
.apps button > svg { width: 24px; height: 24px; }
.running::after { content: ""; position: absolute; left: 4px; right: 4px; bottom: 0; height: 2px; background: #0078d7; }
.partial::after { background: linear-gradient(90deg, #0078d7 80%, #69a9e4 80%); }
.apps .focused { background: #f4f8fb; }
.focused::after { left: 0; right: 0; }
.badge { position: absolute; right: 9px; bottom: 6px; width: 16px; height: 16px; border-radius: 50%; color: #fff; font-size: 10px; line-height: 16px; }
.badge svg { width: 16px; height: 16px; }
.a1 { background: #2b6a1d; }
.a2 { background: #5c6bc0; }
.a3 { background: #7b1fa2; }
.count { position: absolute; right: 10px; bottom: 6px; width: 16px; line-height: 11px; border-radius: 2px; background: #f23c34; color: #fff; font-size: 9px; }
.tray { display: flex; align-items: center; margin-left: auto; padding-right: 4px; }
.weather { gap: 8px; margin-right: 16px; font-size: 14px; white-space: nowrap; }
.weather svg { width: 24px; height: 24px; }
.tray-icon { width: 24px; }
.tray-icon svg { width: 16px; height: 16px; fill: none; stroke: #111; }
.lang { width: 34px; font-size: 12px; }
.clock { flex-direction: column; width: 74px; font-size: 12px; line-height: 18px; white-space: nowrap; }
.notify { position: relative; width: 38px; height: 40px; }
.notify svg { width: 17px; height: 16px; }
.notify span { position: absolute; right: 2px; bottom: 4px; width: 17px; height: 17px; border: 1px solid #888; border-radius: 50%; background: #d5d9df; font-size: 11px; line-height: 15px; }
.peek { width: 1px; height: 40px; margin-left: 10px; background: #a9b3c2; }
```
